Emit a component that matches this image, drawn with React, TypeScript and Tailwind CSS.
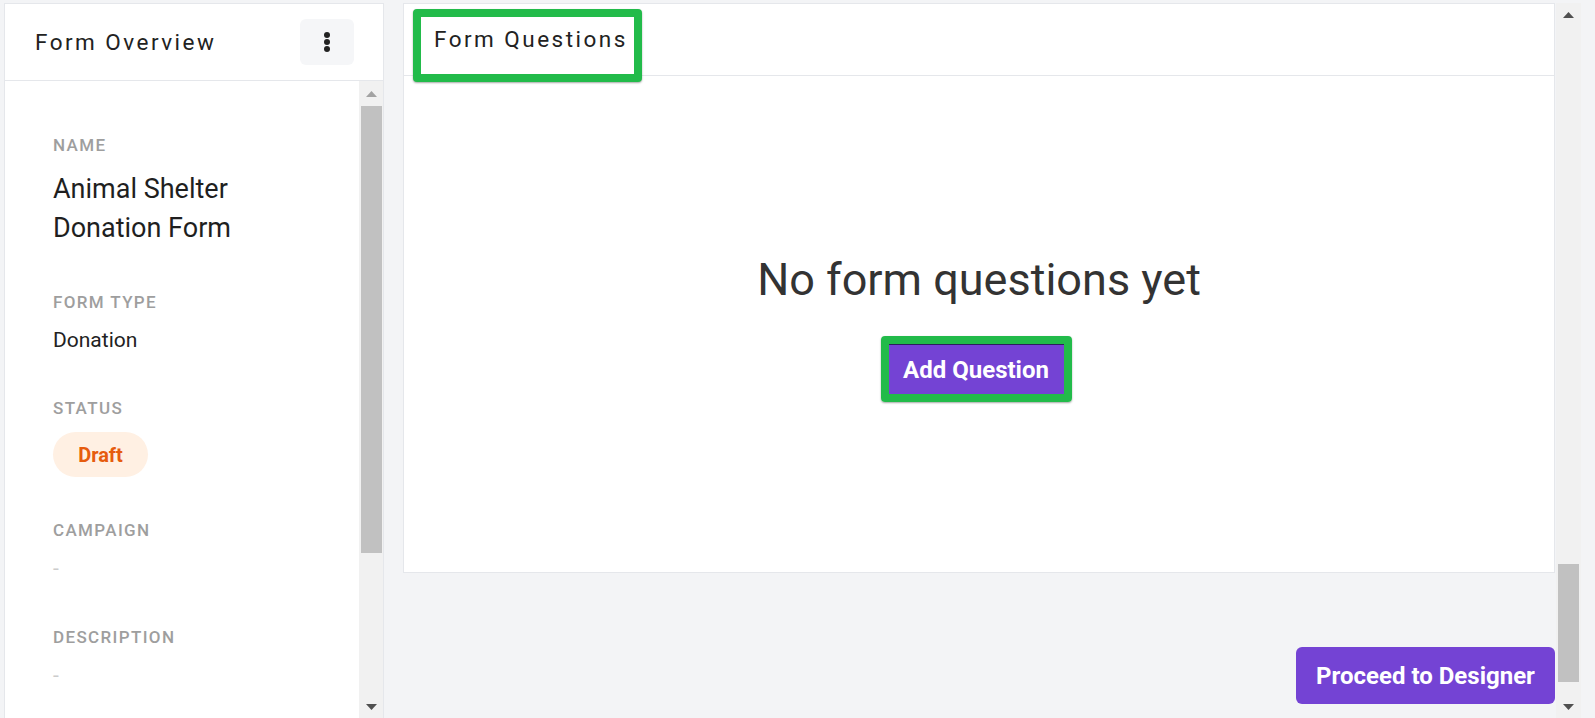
import React from "react";

function Arrow({ dir, color }: { dir: "up" | "down"; color: string }) {
  return (
    <svg width="11" height="6" viewBox="0 0 11 6" className="block">
      {dir === "up" ? (
        <polygon points="5.5,0 11,6 0,6" fill={color} />
      ) : (
        <polygon points="0,0 11,0 5.5,6" fill={color} />
      )}
    </svg>
  );
}

function Label({ children, mb }: { children: React.ReactNode; mb: string }) {
  return (
    <div className={`text-[17px] leading-[20px] font-medium tracking-[0.08em] text-[#9e9e9e] ${mb}`}>
      {children}
    </div>
  );
}

export default function App() {
  return (
    <div className="h-[718px] w-full overflow-hidden bg-[#f3f4f6] flex pt-[3px] pl-[4px] pr-[14px] font-['Roboto',sans-serif]">
      {/* Left panel */}
      <div className="w-[380px] shrink-0 h-[740px] bg-white border border-[#e5e7eb] flex flex-col">
        <div className="h-[77px] shrink-0 border-b border-[#e5e7eb] flex items-center justify-between pl-[30px] pr-[29px]">
          <div className="text-[22.5px] leading-[26px] tracking-[0.11em] text-[#222222]">
            Form Overview
          </div>
          <button className="w-[54px] h-[46px] rounded-[6px] bg-[#f5f6f8] flex items-center justify-center">
            <svg width="8" height="22" viewBox="0 0 8 22">
              <circle cx="4" cy="4" r="3" fill="#222" />
              <circle cx="4" cy="11" r="3" fill="#222" />
              <circle cx="4" cy="18" r="3" fill="#222" />
            </svg>
          </button>
        </div>
        <div className="flex flex-1 min-h-0">
          <div className="flex-1 pl-[48px] pt-[54px]">
            <div className="mb-[44px]">
              <Label mb="mb-[15px]">NAME</Label>
              <div className="text-[27px] leading-[39px] text-[#1f1f1f]">
                Animal Shelter
                <br />
                Donation Form
              </div>
            </div>
            <div className="mb-[43px]">
              <Label mb="mb-[13px]">FORM TYPE</Label>
              <div className="text-[21px] leading-[30px] text-[#222222]">Donation</div>
            </div>
            <div className="mb-[43px]">
              <Label mb="mb-[14px]">STATUS</Label>
              <div className="inline-flex items-center justify-center w-[95px] h-[45px] rounded-full bg-[#fff0e3] text-[20px] font-bold text-[#e65c0e]">
                Draft
              </div>
            </div>
            <div className="mb-[44px]">
              <Label mb="mb-[13px]">CAMPAIGN</Label>
              <div className="text-[21px] leading-[30px] text-[#cccccc]">-</div>
            </div>
            <div>
              <Label mb="mb-[13px]">DESCRIPTION</Label>
              <div className="text-[21px] leading-[30px] text-[#cccccc]">-</div>
            </div>
          </div>
          {/* scrollbar */}
          <div className="w-[24px] shrink-0 bg-[#f1f1f1] flex flex-col items-center h-[637px]">
            <div className="pt-[10px] h-[25px]">
              <Arrow dir="up" color="#a3a3a3" />
            </div>
            <div className="w-[21px] h-[447px] bg-[#c1c1c1]" />
            <div className="flex-1" />
            <div className="pb-[8px]">
              <Arrow dir="down" color="#505050" />
            </div>
          </div>
        </div>
      </div>

      {/* Main column */}
      <div className="flex-1 flex flex-col pl-[19px] pr-[1px] min-w-0">
        <div className="h-[570px] bg-white border border-[#e5e7eb] flex flex-col">
          <div className="h-[72px] shrink-0 border-b border-[#e5e7eb]">
            <div className="relative z-10 ml-[9px] mt-[5px] w-[229px] h-[73px] border-[8px] border-[#22bb4a] rounded-[4px] bg-white shadow-[0_1px_2px_rgba(0,0,0,0.35)]">
              <div className="pl-[13px] pt-[9px] text-[22.5px] leading-[26px] tracking-[0.11em] text-[#222222] whitespace-nowrap">
                Form Questions
              </div>
            </div>
          </div>
          <div className="flex-1 flex flex-col items-center pt-[178px]">
            <div className="text-[45px] leading-[52px] text-[#333333]">
              No form questions yet
            </div>
            <div className="mt-[30px] mr-[6px] border-[8px] border-[#22bb4a] rounded-[4px] shadow-[0_1px_2px_rgba(0,0,0,0.35)]">
              <button className="w-[175px] h-[50px] bg-[#7443d4] border-t border-[#2d1f5e] text-white text-[24px] font-bold flex items-center justify-center">
                Add Question
              </button>
            </div>
          </div>
        </div>
        <div className="flex justify-end mt-[74px]">
          <button className="w-[259px] h-[57px] rounded-[6px] bg-[#7443d4] text-white text-[24px] font-bold">
            Proceed to Designer
          </button>
        </div>
      </div>

      {/* main scrollbar */}
      <div className="w-[25px] shrink-0 bg-[#f1f1f1] flex flex-col items-center h-[715px]">
        <div className="pt-[9px] h-[561px]">
          <Arrow dir="up" color="#505050" />
        </div>
        <div className="w-[21px] h-[118px] bg-[#c1c1c1]" />
        <div className="flex-1" />
        <div className="pb-[8px]">
          <Arrow dir="down" color="#505050" />
        </div>
      </div>
    </div>
  );
}
